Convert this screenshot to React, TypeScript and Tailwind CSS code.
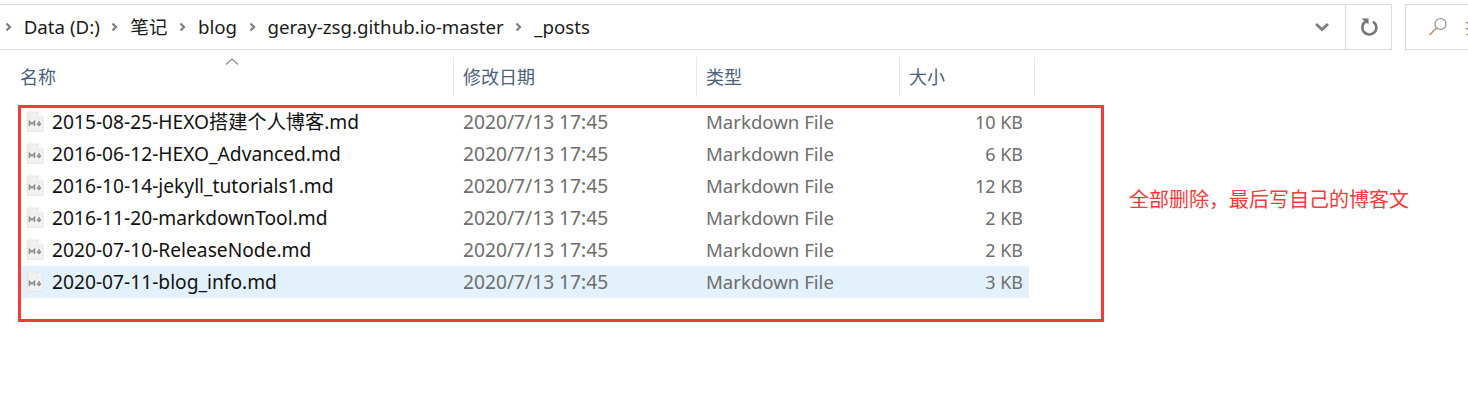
import React from 'react'

const files = [
  { name: '2015-08-25-HEXO搭建个人博客.md', size: '10 KB' },
  { name: '2016-06-12-HEXO_Advanced.md', size: '6 KB' },
  { name: '2016-10-14-jekyll_tutorials1.md', size: '12 KB' },
  { name: '2016-11-20-markdownTool.md', size: '2 KB' },
  { name: '2020-07-10-ReleaseNode.md', size: '2 KB' },
  { name: '2020-07-11-blog_info.md', size: '3 KB', selected: true },
]

const crumbs = ['Data (D:)', '笔记', 'blog', 'geray-zsg.github.io-master', '_posts']

const Chevron = () => (
  <svg width="7" height="10" viewBox="0 0 7 10" className="shrink-0">
    <path d="M1.5 1.5 L5 5 L1.5 8.5" fill="none" stroke="#7d7d7d" strokeWidth="2.2" />
  </svg>
)

const MdIcon = () => (
  <svg width="18" height="22" viewBox="0 0 18 22" className="shrink-0">
    <path d="M1.5 1 H12 L17 6 V20.5 H1.5 Z" fill="#f1f1f1" stroke="#e4e4e4" />
    <path d="M12 1 V6 H17" fill="#ffffff" stroke="#e4e4e4" />
    <path d="M3.5 15 V10.5 L6 13 L8.5 10.5 V15" fill="none" stroke="#8a8a8a" strokeWidth="1.5" />
    <path d="M13 10 V14 M11 12.5 L13 14.5 L15 12.5" fill="none" stroke="#8a8a8a" strokeWidth="1.5" />
  </svg>
)

const HeaderCell = ({ label, width }: { label: string; width: string }) => (
  <div className={`${width} h-10 shrink-0 flex items-center border-r border-[#e5e5e5] text-[#4c607a] text-[18px]`}>
    {label}
  </div>
)

export default function App() {
  return (
    <div className="w-[1468px] h-[401px] bg-white overflow-hidden font-['Noto_Sans','Noto_Sans_CJK_SC',sans-serif]">
      {/* toolbar */}
      <div className="pt-1 flex h-[50px]">
        <div className="w-[1392px] h-[46px] shrink-0 flex items-center border-y border-r border-[#d9d9d9] pl-[5px]">
          <div className="flex items-center gap-[11.7px] flex-1 text-[18.7px] text-[#1a1a1a]">
            {crumbs.map((c) => (
              <React.Fragment key={c}>
                <Chevron />
                <span className="leading-none">{c}</span>
              </React.Fragment>
            ))}
          </div>
          <div className="w-[46px] h-full flex items-center justify-center">
            <svg width="16" height="10" viewBox="0 0 16 10">
              <path d="M2 2 L8 7.5 L14 2" fill="none" stroke="#7d7d7d" strokeWidth="2.8" />
            </svg>
          </div>
          <div className="w-[46px] h-full flex items-center justify-center border-l border-[#d9d9d9]">
            <svg width="18" height="18" viewBox="0 0 18 18">
              <path d="M6 3.4 A7 7 0 1 0 13 3.6" fill="none" stroke="#757575" strokeWidth="2.6" />
              <path d="M1.5 0.5 H8.5 V6.5 Z" fill="#757575" />
            </svg>
          </div>
        </div>
        <div className="ml-[13px] flex-1 h-[46px] border-y border-l border-[#d9d9d9] flex items-center pl-[22px] overflow-hidden">
          <svg width="20" height="20" viewBox="0 0 20 20" className="shrink-0">
            <circle cx="12.5" cy="7" r="5.5" fill="none" stroke="#8a8a8a" strokeWidth="1.2" />
            <path d="M8.5 11 L1.5 18" stroke="#b98a5a" strokeWidth="1.4" />
          </svg>
          <span className="ml-[17px] text-[18px] text-[#8a8a8a] whitespace-nowrap">搜索</span>
        </div>
      </div>

      {/* column headers */}
      <div className="relative mt-[7px] flex">
        <HeaderCell label="名称" width="w-[454px] pl-[20px]" />
        <HeaderCell label="修改日期" width="w-[243px] pl-[9px]" />
        <HeaderCell label="类型" width="w-[203px] pl-[9px]" />
        <HeaderCell label="大小" width="w-[135px] pl-[9px]" />
        <svg width="14" height="7" viewBox="0 0 14 7" className="absolute left-[225px] top-[1px]">
          <path d="M1 6.5 L7 1 L13 6.5" fill="none" stroke="#8a8a8a" strokeWidth="1.1" />
        </svg>
      </div>

      {/* file list */}
      <div className="mt-2 ml-[18px] w-[1086px] h-[217px] border-[3px] border-[#f73a3a]">
        <div className="-mt-[2px]">
          {files.map((f) => (
            <div
              key={f.name}
              className={`w-[1008px] h-8 flex items-center text-[19.2px] ${f.selected ? 'bg-[#e3f1fc]' : ''}`}
            >
              <div className="w-[432px] shrink-0 flex items-center pl-[5px] text-[#111111]">
                <MdIcon />
                <span className="ml-[8px] whitespace-nowrap">{f.name}</span>
              </div>
              <div className="w-[243px] shrink-0 pl-[10px] text-[#6d6d6d] whitespace-nowrap">2020/7/13 17:45</div>
              <div className="w-[203px] shrink-0 pl-[10px] text-[18.6px] text-[#6d6d6d] whitespace-nowrap">Markdown File</div>
              <div className="w-[124px] shrink-0 text-right text-[18px] text-[#6d6d6d] whitespace-nowrap">{f.size}</div>
            </div>
          ))}
        </div>
      </div>

      {/* annotation */}
      <div className="absolute left-[1129px] top-[186px] text-[#f73a3a] text-[20px] leading-[27px] whitespace-nowrap">
        全部删除，最后写自己的博客文
      </div>
    </div>
  )
}
